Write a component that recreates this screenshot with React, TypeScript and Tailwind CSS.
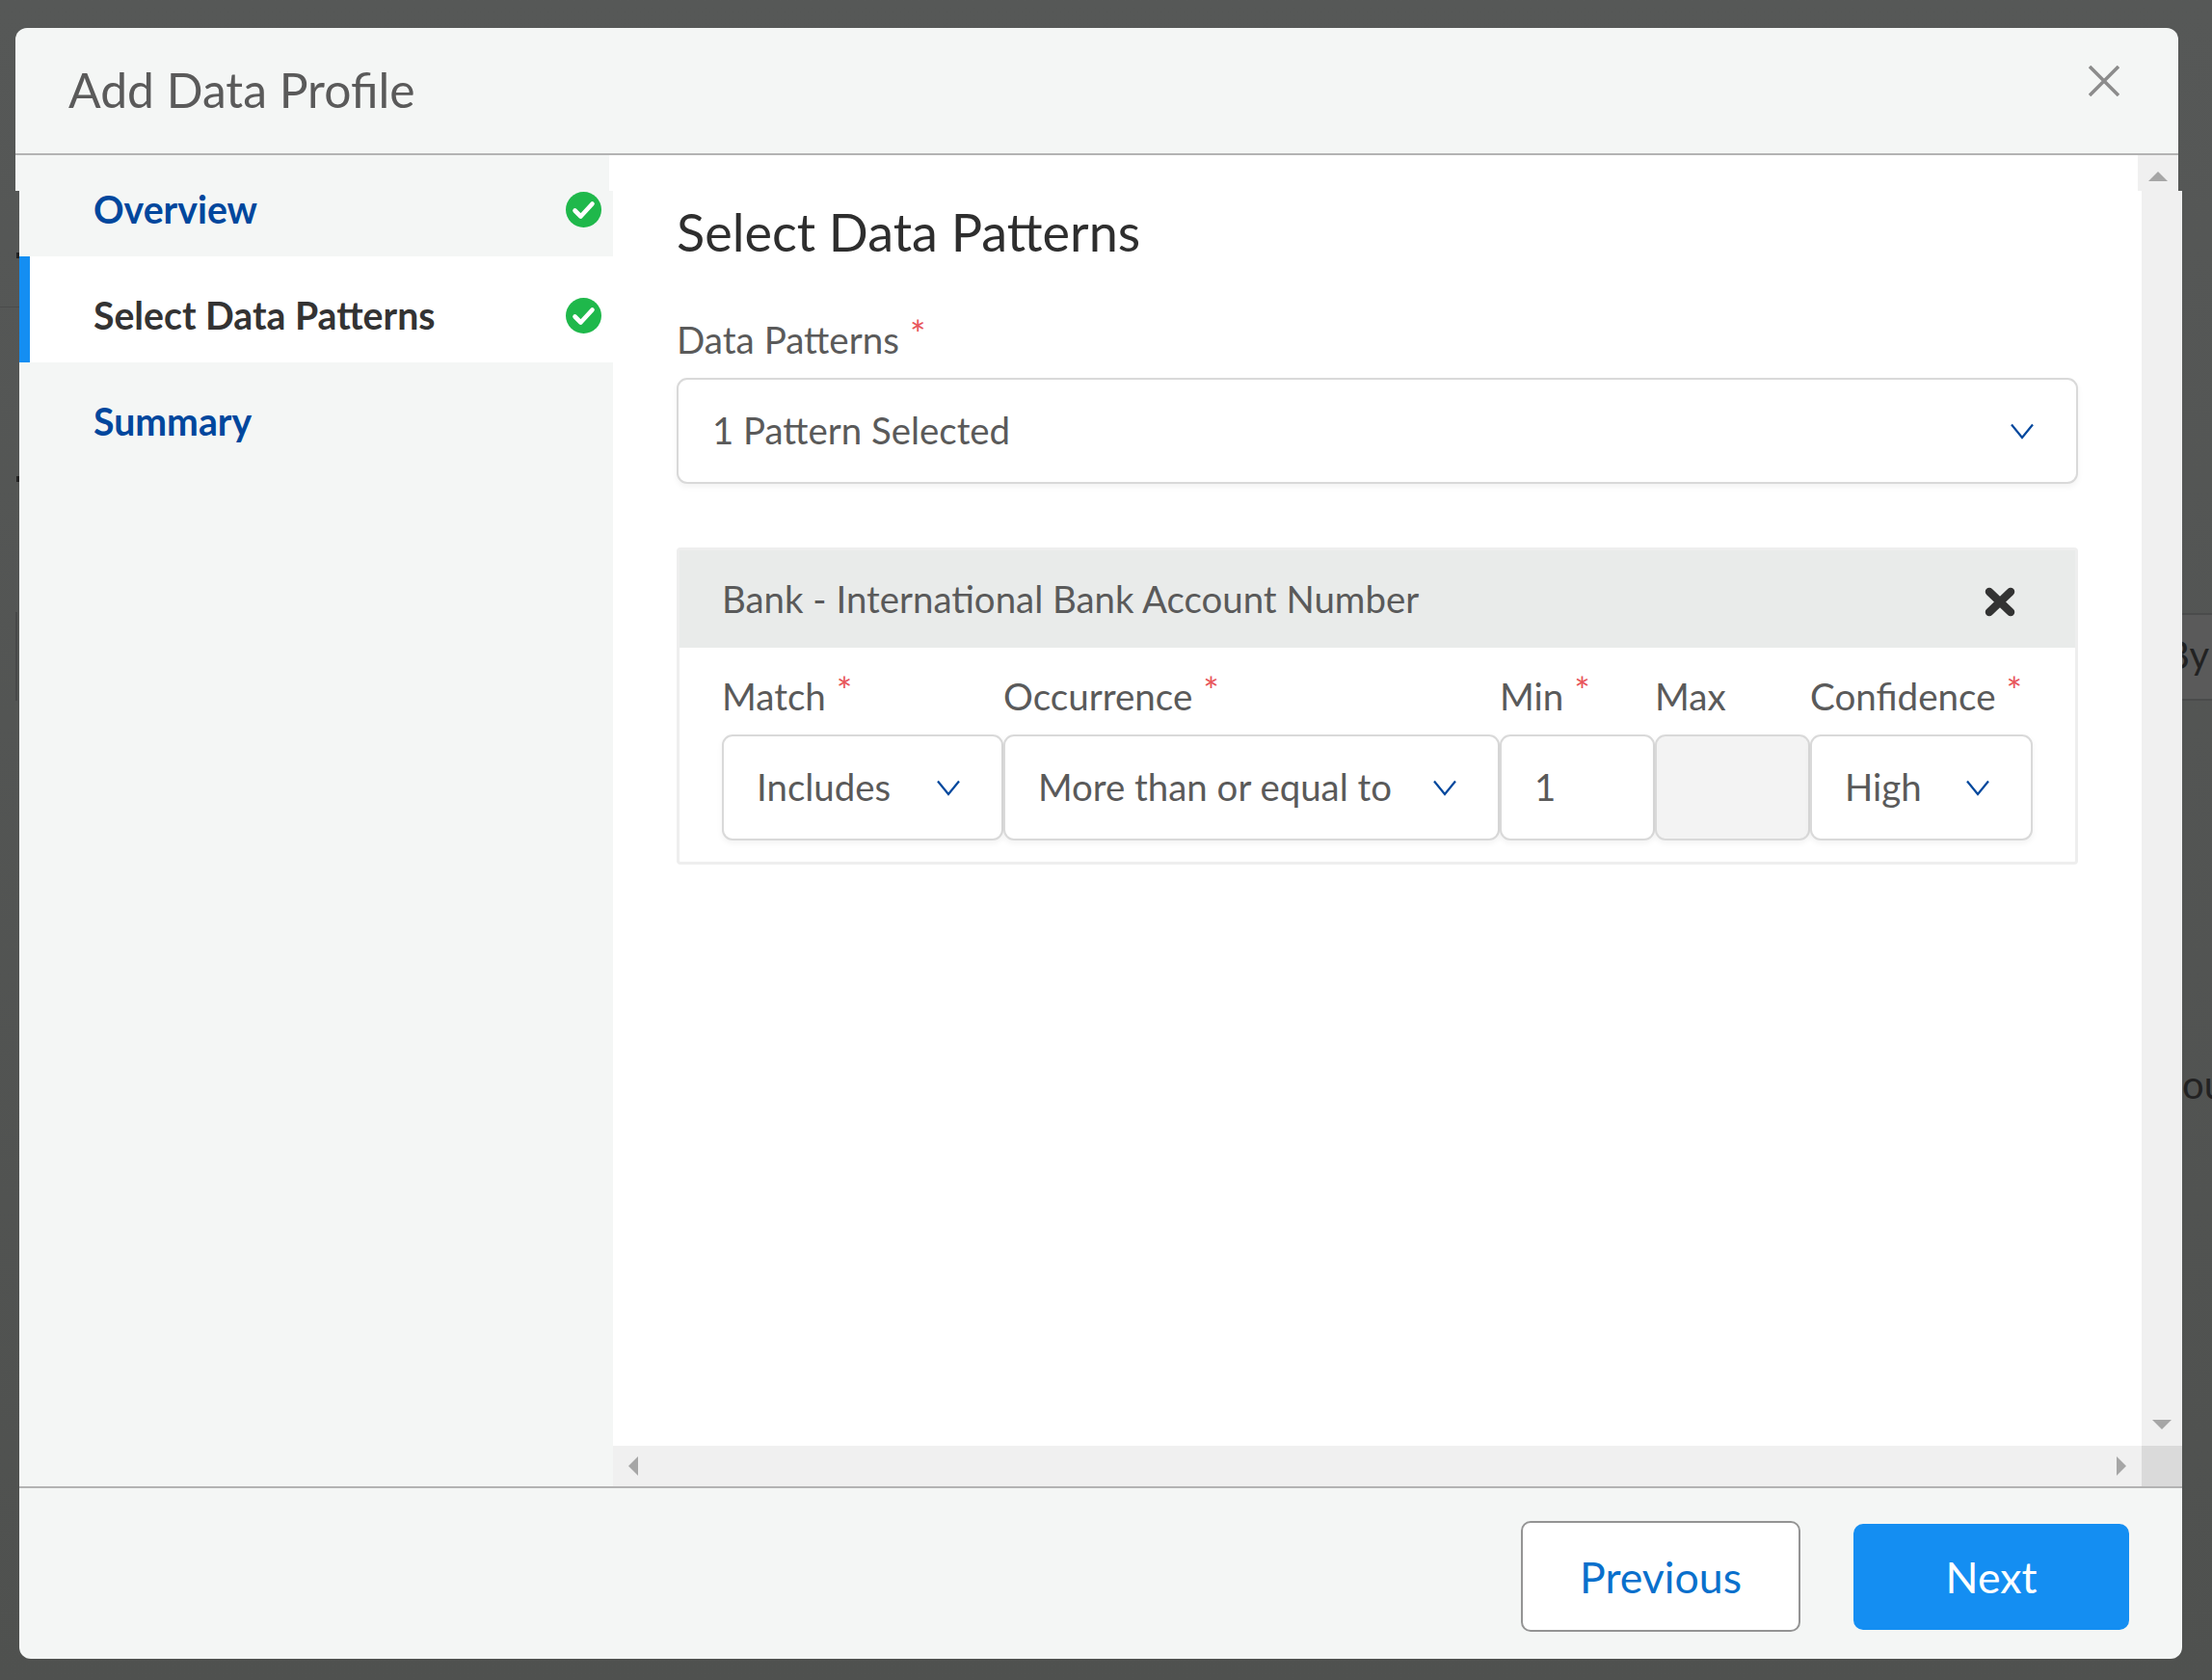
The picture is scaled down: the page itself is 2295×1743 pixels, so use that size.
const font = "font-['Lato','Liberation_Sans',sans-serif]";

const Chevron = () => (
  <svg width="24" height="17" viewBox="0 0 24 17" fill="none" className="shrink-0">
    <path d="M1 1.5 L12 15 L23 1.5" stroke="#00479d" strokeWidth="2.2" />
  </svg>
);

const Check = () => (
  <svg width="37" height="37" viewBox="0 0 37 37" className="shrink-0">
    <circle cx="18.5" cy="18.5" r="18.5" fill="#1fb84b" />
    <path d="M9.5 19.5 L15.5 25.5 L27.5 12.5" fill="none" stroke="#fff" strokeWidth="4.6" strokeLinecap="round" strokeLinejoin="round" />
  </svg>
);

const Req = () => <span className="ml-[11px] -translate-y-[6px] text-[39px] leading-none text-[#e8555a]">*</span>;

const Label = ({ text, req = true }: { text: string; req?: boolean }) => (
  <div className="flex h-[50px] items-center text-[38.6px] leading-[50px] text-[#5a5a5a]">
    {text}
    {req && <Req />}
  </div>
);

const Field = ({ value, select = true, disabled = false }: { value?: string; select?: boolean; disabled?: boolean }) => (
  <div
    className={`flex h-[110px] items-center justify-between rounded-[11px] border-2 border-[#d9d9d9] pl-[34px] pr-[43px] text-[38.4px] text-[#5a5a5a] shadow-[0_3px_6px_rgba(0,0,0,0.05)] ${
      disabled ? "bg-[#f3f3f3]" : "bg-white"
    }`}
  >
    <span>{value}</span>
    {select && <Chevron />}
  </div>
);

const fields = [
  { w: "w-[292px]", label: "Match", value: "Includes", select: true, req: true },
  { w: "w-[515px]", label: "Occurrence", value: "More than or equal to", select: true, req: true },
  { w: "w-[161px]", label: "Min", value: "1", select: false, req: true },
  { w: "w-[161px]", label: "Max", value: "", select: false, req: false },
  { w: "w-[231px]", label: "Confidence", value: "High", select: true, req: true },
];

const NavRow = ({ text, first, active, check }: { text: string; first?: boolean; active?: boolean; check?: boolean }) => (
  <div
    className={`flex items-center pr-[12px] text-[39.2px] font-bold ${first ? "h-[68px]" : "h-[110px]"} ${
      active ? "border-l-[11px] border-[#148ef2] bg-white pl-[66px] text-[#333]" : "pl-[77px] text-[#00479d]"
    } ${first ? "pb-[29px]" : "pt-[13px]"}`}
  >
    <span className="flex-1">{text}</span>
    {check && <Check />}
  </div>
);

export default function App() {
  return (
    <div className={`relative h-[1743px] w-[2295px] overflow-hidden bg-gradient-to-b from-[#565857] to-[#4f514f] ${font}`}>
      {/* Page behind the dialog */}
      <div className="absolute left-[2264px] top-[636px] h-[91px] w-[31px] border-y-2 border-[#4a4b4b] bg-[#5a5a5a] text-[40px] leading-[82px] text-[#222]">
        <span className="absolute right-[3px]">By</span>
      </div>
      <div className="absolute left-[2264px] top-[1097px] h-[60px] w-[31px] overflow-hidden text-[40px] leading-[56px] text-[#222]">
        ou
      </div>
      <div className="absolute left-0 top-[318px] h-px w-[20px] bg-[#4a4b4b]" />
      <div className="absolute left-[16px] top-[635px] h-[92px] w-[4px] border-l-2 border-[#474848]" />
      <div className="absolute left-[17px] top-[262px] h-[6px] w-[3px] bg-[#222]" />
      <div className="absolute left-[17px] top-[494px] h-[6px] w-[3px] bg-[#222]" />

      <div className="relative pt-[29px]">
        {/* Header */}
        <div className="ml-[16px] flex h-[132px] w-[2244px] items-start justify-between rounded-t-[12px] border-b-2 border-[#b3b3b3] bg-[#f4f6f5] pl-[55px] pr-[61px]">
          <div className="pt-[29px] text-[49.8px] leading-[70px] text-[#5a5a5a]">Add Data Profile</div>
          <svg width="32" height="32" viewBox="0 0 32 32" className="mt-[39px]">
            <path d="M1 1 L31 31 M31 1 L1 31" stroke="#8c8c8c" strokeWidth="3.6" />
          </svg>
        </div>

        {/* Part of the body that sits under the header, offset from the lower body */}
        <div className="ml-[16px] flex h-[37px] w-[2244px]">
          <div className="w-[616px] bg-[#f4f6f5]" />
          <div className="flex-1 bg-white" />
          <div className="flex w-[42px] justify-center bg-[#f0f0f0] pt-[17px]">
            <svg width="20" height="10" viewBox="0 0 20 10">
              <path d="M10 0 L20 10 L0 10 Z" fill="#a6a6a6" />
            </svg>
          </div>
        </div>

        {/* Body */}
        <div className="ml-[20px] flex h-[1344px] w-[2244px]">
          <div className="w-[616px] bg-[#f4f6f5]">
            <NavRow text="Overview" first check />
            <NavRow text="Select Data Patterns" active check />
            <NavRow text="Summary" />
          </div>

          <div className="flex w-[1628px] flex-col">
            <div className="flex h-[1302px]">
              <div className="w-[1586px] bg-white pl-[66px]">
                <div className="w-[1454px]">
                  <h2 className="pt-[11px] text-[54px] font-normal leading-[64px] text-[#2e2e2e]">Select Data Patterns</h2>
                  <div className="mt-[54px]">
                    <Label text="Data Patterns" />
                  </div>
                  <div className="mt-[15px] flex h-[110px] items-center justify-between rounded-[11px] border-2 border-[#d9d9d9] bg-white pl-[35px] pr-[44px] text-[38.4px] text-[#5a5a5a] shadow-[0_3px_6px_rgba(0,0,0,0.05)]">
                    <span>1 Pattern Selected</span>
                    <Chevron />
                  </div>

                  {/* Selected pattern */}
                  <div className="mt-[66px] rounded-[4px] border-[3px] border-[#eeeeee] bg-white">
                    <div className="flex h-[101px] items-center justify-between bg-[#e9ebea] pl-[44px] pr-[62px] text-[38.4px] text-[#5a5a5a]">
                      <span>Bank - International Bank Account Number</span>
                      <svg width="32" height="31" viewBox="0 0 32 31" className="mt-[6px]">
                        <path d="M5 5 L27 26 M27 5 L5 26" stroke="#333" strokeWidth="8.5" strokeLinecap="round" />
                      </svg>
                    </div>
                    <div className="flex pb-[22px] pl-[44px] pt-[25px]">
                      {fields.map((f) => (
                        <div key={f.label} className={f.w}>
                          <Label text={f.label} req={f.req} />
                          <div className="mt-[15px]">
                            <Field value={f.value} select={f.select} disabled={f.label === "Max"} />
                          </div>
                        </div>
                      ))}
                    </div>
                  </div>
                </div>
              </div>
              <div className="flex w-[42px] items-end justify-center bg-[#f0f0f0] pb-[17px]">
                <svg width="20" height="10" viewBox="0 0 20 10">
                  <path d="M0 0 L20 0 L10 10 Z" fill="#a6a6a6" />
                </svg>
              </div>
            </div>
            <div className="flex h-[42px]">
              <div className="flex w-[1586px] items-center justify-between bg-[#f0f0f0] pl-[16px] pr-[16px]">
                <svg width="10" height="20" viewBox="0 0 10 20">
                  <path d="M10 0 L10 20 L0 10 Z" fill="#a6a6a6" />
                </svg>
                <svg width="10" height="20" viewBox="0 0 10 20">
                  <path d="M0 0 L10 10 L0 20 Z" fill="#a6a6a6" />
                </svg>
              </div>
              <div className="w-[42px] bg-[#dadada]" />
            </div>
          </div>
        </div>

        {/* Footer */}
        <div className="ml-[20px] flex h-[179px] w-[2244px] items-center justify-end gap-[55px] rounded-b-[12px] border-t-2 border-[#b3b3b3] bg-[#f4f6f5] pr-[55px] pt-[6px] text-[44.6px]">
          <button className="h-[115px] w-[290px] rounded-[10px] border-2 border-[#949494] bg-white pt-[2px] text-[#0a70cc]">Previous</button>
          <button className="h-[110px] w-[286px] rounded-[10px] bg-[#148ef2] pt-[2px] text-white">Next</button>
        </div>
      </div>
    </div>
  );
}
